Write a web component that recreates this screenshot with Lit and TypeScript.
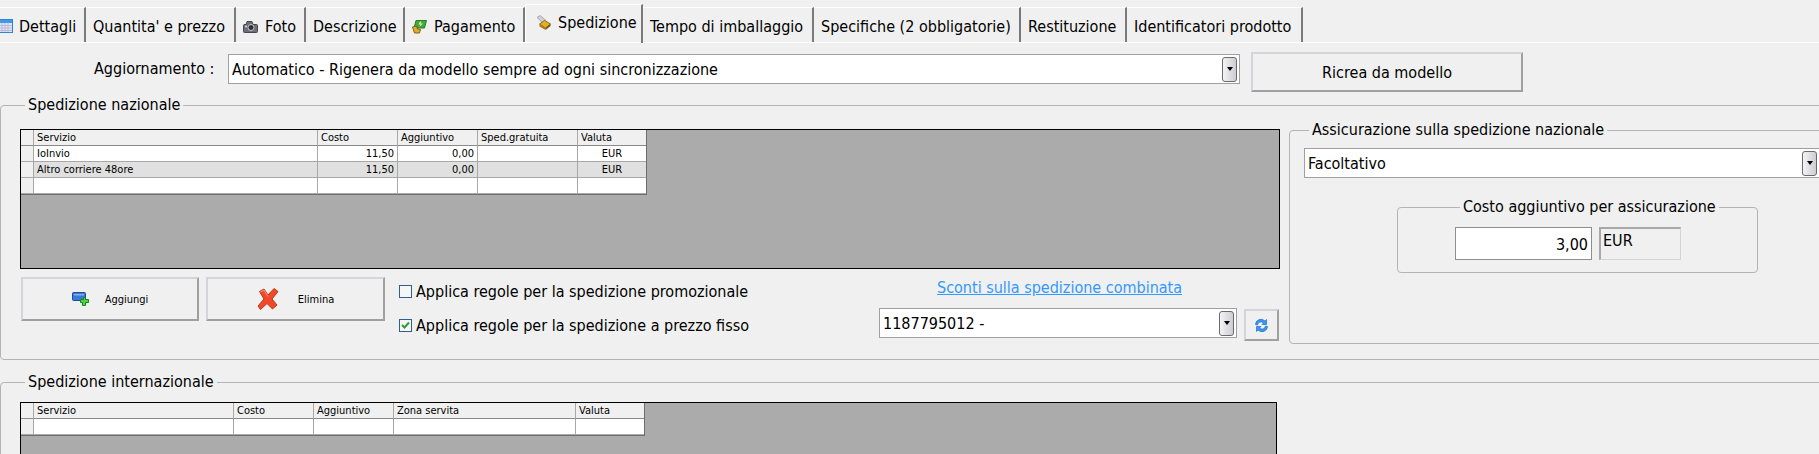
import { LitElement, html, css, svg } from 'lit';
import { customElement } from 'lit/decorators.js';

const ICONS: Record<string, unknown> = {
  calendar: svg`<svg class="tab-icon" width="15" height="14" viewBox="0 0 15 14">
    <rect x="0.5" y="0.5" width="14" height="13" fill="#e4e6f6" stroke="#2f86d0"/>
    <rect x="1" y="1" width="13" height="3" fill="#3f9ae4"/>
    <path d="M1 6.5h13M1 9h13M1 11.5h13M4 4v9M7 4v9M10 4v9" stroke="#b4b8dc" stroke-width="1"/>
  </svg>`,
  camera: svg`<svg class="tab-icon" width="15" height="13" viewBox="0 0 15 13">
    <path d="M1 4.5h2l1-3h5l1 3h3.5a1 1 0 0 1 1 1v6a1 1 0 0 1-1 1H1.500a1 1 0 0 1-1-1v-6a1 1 0 0 1 .5-1z" fill="#6e6e78" stroke="#46464e"/>
    <circle cx="8" cy="7.500" r="3" fill="#2e2e36" stroke="#c8c8d0"/>
    <circle cx="3" cy="6.500" r="1" fill="#d8d8e0"/>
  </svg>`,
  payment: svg`<svg class="tab-icon" width="15" height="15" viewBox="0 0 15 15">
    <path d="M4 1.500h10.500l-2 7.500H2z" fill="#3faa3c" stroke="#2a7a2c"/>
    <path d="M8 2.500l-1.500 3h2l-1 2.500 3.500-3.500H8.500l1-2z" fill="#d8f0a0"/>
    <path d="M.500 8l4-1 1 3 3 .5-1 3.500H2.500z" fill="#dcae2a" stroke="#80601a"/>
  </svg>`,
  shipping: svg`<svg class="tab-icon" width="15" height="16" viewBox="0 0 15 16">
    <path d="M1 2.500l3-2 6 5-3 2.500z" fill="#d2d2d6" stroke="#a8a8ae"/>
    <path d="M3.500 9l5-3.500 6 3.500-5 4z" fill="#e8ae22" stroke="#8a6a20"/>
    <path d="M3.500 9l6 4v2l-6-3.500z" fill="#b07c18"/>
    <path d="M9.500 13l5-4v2l-5 4z" fill="#6e5218"/>
  </svg>`,
};

const TABS = [
  { label: 'Dettagli', width: 86, icon: 'calendar', first: true },
  { label: "Quantita' e prezzo", width: 150 },
  { label: 'Foto', width: 70, icon: 'camera' },
  { label: 'Descrizione', width: 99 },
  { label: 'Pagamento', width: 120, icon: 'payment' },
  { label: 'Spedizione', width: 118, icon: 'shipping', active: true },
  { label: 'Tempo di imballaggio', width: 171 },
  { label: 'Specifiche (2 obbligatorie)', width: 207 },
  { label: 'Restituzione', width: 106 },
  { label: 'Identificatori prodotto', width: 176 },
];

const NATIONAL = {
  columns: [13, 284, 80, 80, 100, 68],
  headers: ['', 'Servizio', 'Costo', 'Aggiuntivo', 'Sped.gratuita', 'Valuta'],
  rows: [
    ['', 'IoInvio', '11,50', '0,00', '', 'EUR'],
    ['', 'Altro corriere 48ore', '11,50', '0,00', '', 'EUR'],
    ['', '', '', '', '', ''],
  ],
  align: ['', '', 'num', 'num', '', 'cur'],
};

const INTERNATIONAL = {
  columns: [13, 200, 80, 80, 182, 68],
  headers: ['', 'Servizio', 'Costo', 'Aggiuntivo', 'Zona servita', 'Valuta'],
  rows: [['', '', '', '', '', '']],
  align: ['', '', '', '', '', ''],
};

@customElement('app-root')
export class AppRoot extends LitElement {
  static styles = css`
    :host {
      display: block;
      width: 1819px;
      height: 454px;
      overflow: hidden;
      background: #f0f0f0;
      color: #000;
      font-family: "DejaVu Sans Condensed", "DejaVu Sans", sans-serif;
      font-size: 16px;
    }

    .tabs {
      display: flex;
      align-items: flex-end;
      height: 43px;
      border-bottom: 1px solid #fff;
      box-sizing: border-box;
    }
    .tab {
      display: flex;
      align-items: center;
      gap: 7px;
      height: 35px;
      margin-bottom: 0;
      padding: 2px 0 0 7px;
      box-sizing: border-box;
      border-top: 1px solid #fff;
      border-right: 2px solid #7a7a7a;
      white-space: nowrap;
    }
    .tab.first {
      padding-left: 0;
      gap: 6px;
    }
    .tab.first .tab-icon {
      margin-left: -2px;
    }
    .tab.active {
      height: 39px;
      margin-bottom: -1px;
      padding: 0 0 3px 10px;
      border-top: 1px solid #fff;
      border-left: 1px solid #fff;
    }
    .tab-icon {
      flex: none;
    }

    .update-row {
      display: flex;
      align-items: flex-start;
      padding: 9px 0 0 94px;
      height: 52px;
      box-sizing: border-box;
    }
    .update-label {
      width: 134px;
      height: 30px;
      margin-top: 2px;
      line-height: 30px;
      white-space: nowrap;
    }

    .combo {
      display: flex;
      align-items: center;
      justify-content: space-between;
      height: 30px;
      box-sizing: border-box;
      padding: 0 2px 0 3px;
      background: #fff;
      border: 1px solid #a0a0a0;
      white-space: nowrap;
    }
    .combo.update {
      width: 1012px;
      margin-top: 2px;
    }
    .combo.insurance {
      width: 516px;
    }
    .combo.discount {
      width: 358px;
    }
    .combo-btn {
      flex: none;
      display: flex;
      align-items: center;
      justify-content: center;
      width: 15px;
      height: 25px;
      box-sizing: border-box;
      border: 1px solid #6a6a6a;
      border-radius: 3px;
      background: linear-gradient(90deg, #f4f4f6, #ccccd2);
    }
    .combo-btn::after {
      content: "";
      border-left: 3px solid transparent;
      border-right: 3px solid transparent;
      border-top: 4px solid #000;
    }

    .btn {
      display: flex;
      align-items: center;
      justify-content: center;
      box-sizing: border-box;
      background: #f0f0f0;
      border: 2px solid #d4d4da;
      border-right-color: #a0a0a0;
      border-bottom-color: #a0a0a0;
    }
    .btn.recreate {
      width: 272px;
      height: 40px;
      margin-left: 11px;
    }
    .btn.action {
      height: 44px;
      font-size: 11px;
    }
    .btn.refresh {
      width: 35px;
      height: 32px;
      margin: 1px 0 0 7px;
    }
    .add {
      width: 178px;
      gap: 15px;
      margin-left: 1px;
    }
    .remove {
      width: 179px;
      gap: 19px;
      margin-left: 7px;
    }

    fieldset {
      margin: 0;
      padding: 0;
      box-sizing: border-box;
      border: 1px solid #b4b4b4;
      border-radius: 4px;
      min-width: 0;
    }
    legend {
      height: 20px;
      line-height: 20px;
      margin-left: 5px;
      padding: 0 3px;
      white-space: nowrap;
    }
    .national {
      width: 1850px;
      height: 265px;
      padding: 5px 0 0 19px;
      display: flex;
    }
    .international {
      width: 1850px;
      height: 200px;
      margin-top: 12px;
      padding: 10px 0 0 19px;
    }
    .left {
      width: 1260px;
      padding-top: 9px;
      flex: none;
    }
    .grid-area {
      height: 140px;
      box-sizing: border-box;
      background: #ababab;
      border: 1px solid #000;
    }
    .international .grid-area {
      width: 1257px;
      height: 100px;
    }
    .grid {
      display: grid;
      width: max-content;
      border-right: 1px solid #6e6e6e;
      border-bottom: 1px solid #6e6e6e;
      font-size: 11px;
    }
    .cell {
      height: 16px;
      line-height: 15px;
      box-sizing: border-box;
      padding: 0 3px;
      background: #fff;
      border-right: 1px solid #a8a8a8;
      border-bottom: 1px solid #a8a8a8;
      white-space: nowrap;
      overflow: hidden;
    }
    .cell:last-child,
    .cell.end {
      border-right: 0;
    }
    .cell.head,
    .cell.gutter {
      background: #f0f0f0;
    }
    .cell.head {
      border-bottom-color: #8a8a8a;
    }
    .cell.alt {
      background: #e0e0e0;
    }
    .cell.gutter.alt {
      background: #f0f0f0;
    }
    .cell.num {
      text-align: right;
    }
    .cell.cur {
      text-align: center;
    }

    .controls {
      display: flex;
      margin-top: 8px;
    }
    .checks {
      display: flex;
      flex-direction: column;
      gap: 14px;
      width: 480px;
      margin-left: 14px;
      padding-top: 4px;
    }
    .check {
      display: flex;
      align-items: center;
      gap: 4px;
      height: 20px;
      white-space: nowrap;
    }
    .box {
      flex: none;
      display: flex;
      align-items: center;
      justify-content: center;
      width: 13px;
      height: 13px;
      box-sizing: border-box;
      border: 1px solid #2f5f8f;
      background: #f6f6f6;
    }
    .discount-col {
      flex: none;
      width: 401px;
    }
    .link {
      display: block;
      width: 358px;
      height: 22px;
      margin-left: 0;
      padding: 1px 0 0 58px;
      box-sizing: border-box;
      line-height: 20px;
      color: #3399ff;
      text-decoration: underline;
      white-space: nowrap;
    }
    .discount-row {
      display: flex;
      align-items: flex-start;
      margin-top: 9px;
    }

    .right {
      flex: none;
      width: 560px;
      height: 224px;
      margin-left: 9px;
      padding: 8px 0 0 14px;
    }
    .surcharge {
      width: 361px;
      height: 76px;
      margin: 19px 0 0 93px;
      padding: 10px 0 0 57px;
      display: flex;
      gap: 7px;
    }
    .amount {
      width: 137px;
      height: 33px;
      box-sizing: border-box;
      padding-right: 3px;
      line-height: 33px;
      text-align: right;
      background: #fff;
      border: 1px solid #8e8e8e;
    }
    .currency {
      width: 82px;
      height: 33px;
      box-sizing: border-box;
      padding-left: 2px;
      line-height: 24px;
      background: #f0f0f0;
      border: 1px solid #d4d4d8;
      border-top: 2px solid #a8a8a8;
      border-left: 2px solid #a8a8a8;
    }
  `;

  renderGrid(data: typeof NATIONAL) {
    const template = data.columns.map((c) => `${c}px`).join(' ');
    return html`
      <div class="grid-area">
        <div class="grid" style="grid-template-columns: ${template}">
          ${data.headers.map((h, i) => html`<div class="cell head ${i === data.headers.length - 1 ? 'end' : ''}">${h}</div>`)}
          ${data.rows.map((row, r) =>
            row.map((value, i) => html`
              <div class="cell ${i === 0 ? 'gutter' : ''} ${r === 1 && data.rows.length > 1 ? 'alt' : ''} ${data.align[i]} ${i === row.length - 1 ? 'end' : ''}">${value}</div>
            `)
          )}
        </div>
      </div>
    `;
  }

  render() {
    return html`
      <div class="tabs">
        ${TABS.map((t) => html`
          <div class="tab ${t.first ? 'first' : ''} ${t.active ? 'active' : ''}" style="width: ${t.width}px">
            ${t.icon ? ICONS[t.icon] : ''}<span>${t.label}</span>
          </div>
        `)}
      </div>

      <div class="update-row">
        <div class="update-label">Aggiornamento :</div>
        <div class="combo update">
          <span>Automatico - Rigenera da modello sempre ad ogni sincronizzazione</span>
          <span class="combo-btn"></span>
        </div>
        <div class="btn recreate">Ricrea da modello</div>
      </div>

      <fieldset class="national">
        <legend>Spedizione nazionale</legend>
        <div class="left">
          ${this.renderGrid(NATIONAL)}
          <div class="controls">
            <div class="btn action add">
              <svg width="18" height="14" viewBox="0 0 18 14">
                <rect x="0.500" y="0.500" width="13" height="8" rx="1" fill="#3b78d8" stroke="#1c4a9c"/>
                <rect x="2" y="2" width="10" height="1.500" fill="#7fb0f0"/>
                <path d="M9.500 5.500h3v-2h2v2h3v3h-3v3h-3v-3h-2z" transform="translate(-1 2)" fill="#52d048" stroke="#108a10"/>
              </svg>
              <span>Aggiungi</span>
            </div>
            <div class="btn action remove">
              <svg width="22" height="22" viewBox="0 0 22 22">
                <path d="M2.500 3.500L7 1l4 6 6-6.500L21 3.500 15 11l5 6-4.500 4L10 15.500 3.500 21.500 1 18l6-7z" fill="#f0482a" stroke="#c2380e" stroke-linejoin="round"/>
                <path d="M3.500 4L7 2l4 6.500" fill="none" stroke="#ff9a7c"/>
              </svg>
              <span>Elimina</span>
            </div>
            <div class="checks">
              <div class="check"><span class="box"></span><span>Applica regole per la spedizione promozionale</span></div>
              <div class="check">
                <span class="box">
                  <svg width="9" height="8" viewBox="0 0 9 8"><path d="M1 4l2.500 2.500L8 1.500" fill="none" stroke="#2ca02c" stroke-width="2"/></svg>
                </span>
                <span>Applica regole per la spedizione a prezzo fisso</span>
              </div>
            </div>
            <div class="discount-col">
              <a class="link">Sconti sulla spedizione combinata</a>
              <div class="discount-row">
                <div class="combo discount">
                  <span>1187795012 -</span>
                  <span class="combo-btn"></span>
                </div>
                <div class="btn refresh">
                  <svg width="15" height="15" viewBox="0 0 15 15">
                    <path d="M1.500 6.500A5.500 5.500 0 0 1 11 3l1.500-1.500V6.500H8L9.500 5A3.500 3.500 0 0 0 3.500 7z" fill="#3c96f0" stroke="#1c70d0" stroke-width="0.700"/>
                    <path d="M13.500 8.500A5.500 5.500 0 0 1 4 12l-1.500 1.500V8.500H7L5.500 10a3.500 3.500 0 0 0 6-2z" fill="#3c96f0" stroke="#1c70d0" stroke-width="0.700"/>
                  </svg>
                </div>
              </div>
            </div>
          </div>
        </div>
        <fieldset class="right">
          <legend>Assicurazione sulla spedizione nazionale</legend>
          <div class="combo insurance">
            <span>Facoltativo</span>
            <span class="combo-btn"></span>
          </div>
          <fieldset class="surcharge">
            <legend>Costo aggiuntivo per assicurazione</legend>
            <div class="amount">3,00</div>
            <div class="currency">EUR</div>
          </fieldset>
        </fieldset>
      </fieldset>

      <fieldset class="international">
        <legend>Spedizione internazionale</legend>
        ${this.renderGrid(INTERNATIONAL)}
      </fieldset>
    `;
  }
}
